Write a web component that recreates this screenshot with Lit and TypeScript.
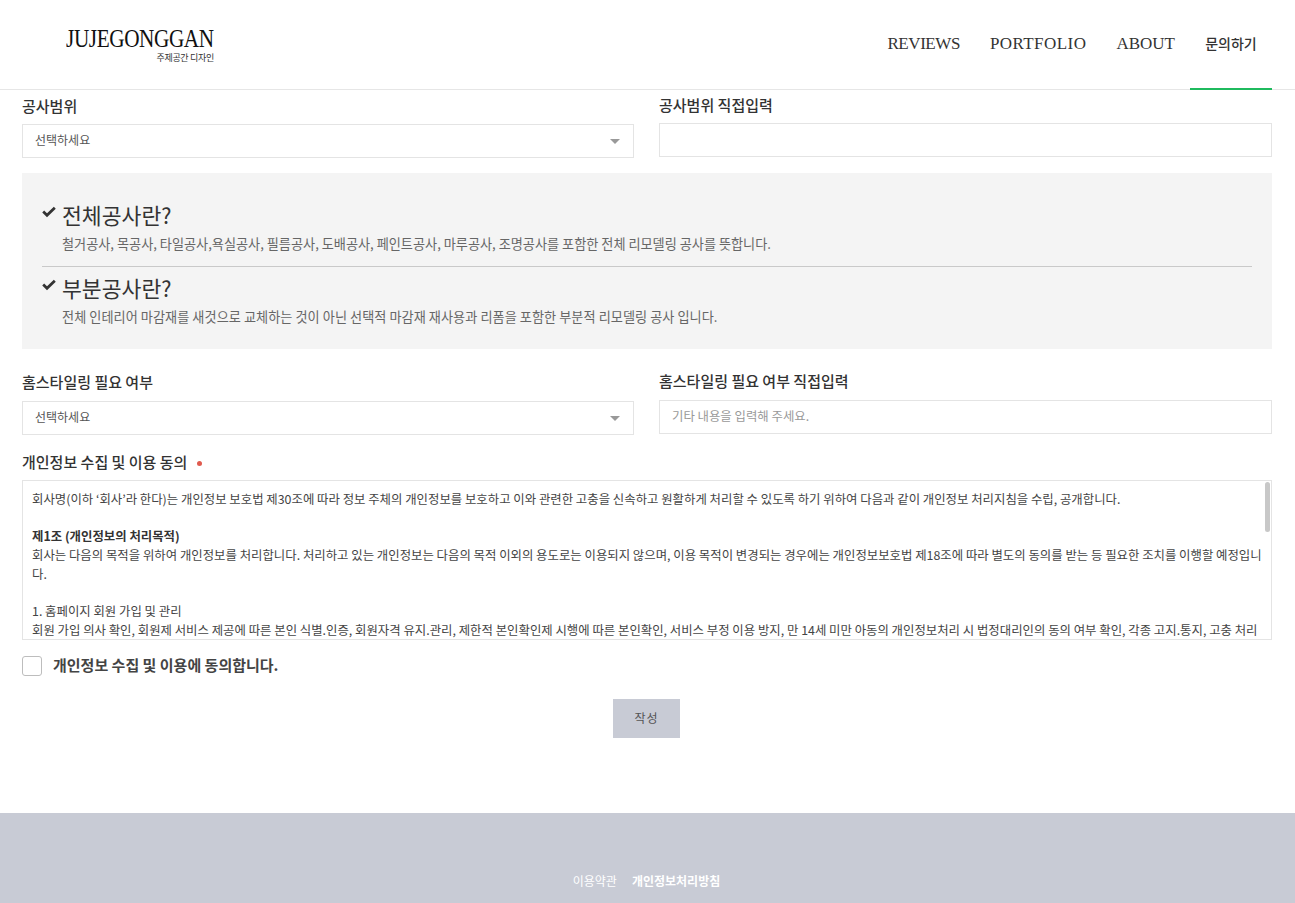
import { LitElement, html, css } from "lit";
import { customElement } from "lit/decorators.js";

@customElement("app-root")
export class AppRoot extends LitElement {
  static styles = css`
    :host {
      display: block;
      height: 903px;
      overflow: hidden;
      background: #fff;
      font-family: "Noto Sans CJK KR", "Noto Sans", sans-serif;
      color: #333;
    }
    * { box-sizing: border-box; }
    .header {
      height: 90px;
      border-bottom: 1px solid #e6e6e6;
      display: flex;
      justify-content: space-between;
      padding: 0 23px 0 66px;
    }
    .logo {
      display: flex;
      flex-direction: column;
      align-items: flex-end;
      width: 148px;
      padding-top: 25px;
    }
    .logo-main {
      font-family: "Liberation Serif", serif;
      font-size: 25px;
      line-height: 27px;
      letter-spacing: -0.5px;
      color: #111;
      white-space: nowrap;
      transform: scaleX(0.85);
      transform-origin: right center;
    }
    .logo-sub {
      font-size: 9px;
      line-height: 12px;
      color: #333;
      letter-spacing: -0.3px;
      white-space: nowrap;
    }
    .nav { display: flex; align-items: stretch; gap: 30px; }
    .nav a {
      font-family: "Liberation Serif", serif;
      font-size: 17px;
      color: #333;
      line-height: 24px;
      padding-top: 32px;
      height: 89px;
      white-space: nowrap;
    }
    .nav a.tight { letter-spacing: -0.45px; }
    .nav a.wide { letter-spacing: 0.45px; }
    .nav a.active {
      font-family: "Noto Sans CJK KR", sans-serif;
      font-size: 14px;
      font-weight: 500;
      width: 82px;
      margin-left: -15px;
      padding: 31px 0 0 0;
      text-align: center;
      border-bottom: 2px solid #1fba5e;
      height: 90px;
    }
    .content { padding: 0 23px 0 22px; }
    .row {
      display: grid;
      grid-template-columns: 612px 613px;
      column-gap: 25px;
    }
    .label {
      font-size: 15px;
      font-weight: 500;
      line-height: 22px;
      color: #333;
      white-space: nowrap;
    }
    .field-left { padding-top: 5px; }
    .field-right { padding-top: 4px; }
    .box {
      margin-top: 7px;
      height: 34px;
      border: 1px solid #e4e4e4;
      display: flex;
      align-items: center;
      justify-content: space-between;
      padding: 0 12px 4px;
      font-size: 12px;
      color: #555;
      background: #fff;
    }
    .placeholder { color: #999; font-size: 12.4px; margin-top: 2px; }
    .caret {
      width: 0;
      height: 0;
      margin-top: 4px;
      margin-right: 1px;
      border-left: 5px solid transparent;
      border-right: 5px solid transparent;
      border-top: 5px solid #999;
    }
    .panel {
      margin-top: 15px;
      height: 176px;
      background: #f4f4f4;
      padding: 25px 20px 0;
    }
    .item { display: grid; grid-template-columns: 20px 1fr; }
    .check { width: 14px; height: 12px; margin-top: 8px; }
    .item h3 {
      margin: 0;
      font-size: 21.6px;
      font-weight: 400;
      line-height: 33px;
      color: #333;
    }
    .item p {
      margin: 0;
      font-size: 13.15px;
      line-height: 26px;
      color: #666;
      white-space: nowrap;
    }
    .item-first { height: 69px; border-bottom: 1px solid #c9c9c9; margin-bottom: 4px; }
    .item-second h3 { padding-top: 1px; }
    .item-second h3 { line-height: 32px; }
    .item-second p { letter-spacing: 0.05px; }
    .row-2 { margin-top: 21px; }
    .row-2 .field-left { padding-top: 1px; }
    .row-2 .field-right { padding-top: 0; }
    .row-2 .box { margin-top: 8px; }
    .consent-label {
      margin-top: 16px;
      display: flex;
      align-items: center;
      gap: 10px;
    }
    .dot {
      width: 5px;
      height: 5px;
      border-radius: 50%;
      background: #e05a4e;
      margin-top: 3px;
    }
    .terms {
      margin-top: 7px;
      height: 160px;
      border: 1px solid #e4e4e4;
      position: relative;
      overflow: hidden;
      padding: 9px 9px 0 9px;
      font-size: 12.4px;
      line-height: 18.7px;
      color: #444;
    }
    .terms p { margin: 0; }
    .terms b { font-weight: 700; color: #333; }
    .gap { height: 18.7px; }
    .thumb {
      position: absolute;
      right: 1px;
      top: 1px;
      width: 5px;
      height: 50px;
      border-radius: 3px;
      background: #c8c8c8;
    }
    .agree {
      margin-top: 16px;
      display: flex;
      align-items: center;
      gap: 11px;
      font-size: 15px;
      line-height: 20px;
      font-weight: 700;
      color: #444;
    }
    .agree span:last-child { margin-top: -2px; }
    .cb {
      width: 20px;
      height: 20px;
      border: 1px solid #bdbdbd;
      border-radius: 3px;
      background: #fff;
    }
    .submit-wrap { margin-top: 23px; padding-right: 1px; display: flex; justify-content: center; }
    .submit {
      width: 67px;
      height: 39px;
      background: #c8cbd5;
      display: flex;
      align-items: center;
      justify-content: center;
      font-size: 12px;
      letter-spacing: 1px;
      color: #555;
      padding-bottom: 2px;
    }
    .footer {
      margin-top: 75px;
      height: 90px;
      background: #c8cbd5;
      display: flex;
      justify-content: center;
      gap: 15px;
      padding: 58px 2px 0 0;
      font-size: 12px;
      line-height: 20px;
      color: #fff;
    }
    .footer b { font-weight: 700; }
  `;

  private check() {
    return html`<svg class="check" viewBox="0 0 14 12" aria-hidden="true">
      <path d="M1.2 5.6 L5 9.2 L12.8 1.8" fill="none" stroke="#333" stroke-width="2.8" />
    </svg>`;
  }

  render() {
    return html`
      <header class="header">
        <div class="logo">
          <span class="logo-main">JUJEGONGGAN</span>
          <span class="logo-sub">주제공간 디자인</span>
        </div>
        <nav class="nav">
          <a class="tight">REVIEWS</a>
          <a class="wide">PORTFOLIO</a>
          <a>ABOUT</a>
          <a class="active">문의하기</a>
        </nav>
      </header>
      <main class="content">
        <div class="row">
          <div class="field-left">
            <div class="label">공사범위</div>
            <div class="box"><span>선택하세요</span><span class="caret"></span></div>
          </div>
          <div class="field-right">
            <div class="label">공사범위 직접입력</div>
            <div class="box"></div>
          </div>
        </div>
        <section class="panel">
          <div class="item item-first">
            ${this.check()}
            <div>
              <h3>전체공사란?</h3>
              <p>철거공사, 목공사, 타일공사,욕실공사, 필름공사, 도배공사, 페인트공사, 마루공사, 조명공사를 포함한 전체 리모델링 공사를 뜻합니다.</p>
            </div>
          </div>
          <div class="item item-second">
            ${this.check()}
            <div>
              <h3>부분공사란?</h3>
              <p>전체 인테리어 마감재를 새것으로 교체하는 것이 아닌 선택적 마감재 재사용과 리폼을 포함한 부분적 리모델링 공사 입니다.</p>
            </div>
          </div>
        </section>
        <div class="row row-2">
          <div class="field-left">
            <div class="label">홈스타일링 필요 여부</div>
            <div class="box"><span>선택하세요</span><span class="caret"></span></div>
          </div>
          <div class="field-right">
            <div class="label">홈스타일링 필요 여부 직접입력</div>
            <div class="box"><span class="placeholder">기타 내용을 입력해 주세요.</span></div>
          </div>
        </div>
        <div class="label consent-label">개인정보 수집 및 이용 동의<span class="dot"></span></div>
        <div class="terms">
          <p>회사명(이하 ‘회사’라 한다)는 개인정보 보호법 제30조에 따라 정보 주체의 개인정보를 보호하고 이와 관련한 고충을 신속하고 원활하게 처리할 수 있도록 하기 위하여 다음과 같이 개인정보 처리지침을 수립, 공개합니다.</p>
          <div class="gap"></div>
          <p><b>제1조 (개인정보의 처리목적)</b></p>
          <p>회사는 다음의 목적을 위하여 개인정보를 처리합니다. 처리하고 있는 개인정보는 다음의 목적 이외의 용도로는 이용되지 않으며, 이용 목적이 변경되는 경우에는 개인정보보호법 제18조에 따라 별도의 동의를 받는 등 필요한 조치를 이행할 예정입니다.</p>
          <div class="gap"></div>
          <p>1. 홈페이지 회원 가입 및 관리</p>
          <p>회원 가입 의사 확인, 회원제 서비스 제공에 따른 본인 식별.인증, 회원자격 유지.관리, 제한적 본인확인제 시행에 따른 본인확인, 서비스 부정 이용 방지, 만 14세 미만 아동의 개인정보처리 시 법정대리인의 동의 여부 확인, 각종 고지.통지, 고충 처리</p>
          <div class="thumb"></div>
        </div>
        <div class="agree"><span class="cb"></span><span>개인정보 수집 및 이용에 동의합니다.</span></div>
        <div class="submit-wrap"><div class="submit">작성</div></div>
      </main>
      <footer class="footer">
        <span>이용약관</span>
        <b>개인정보처리방침</b>
      </footer>
    `;
  }
}
